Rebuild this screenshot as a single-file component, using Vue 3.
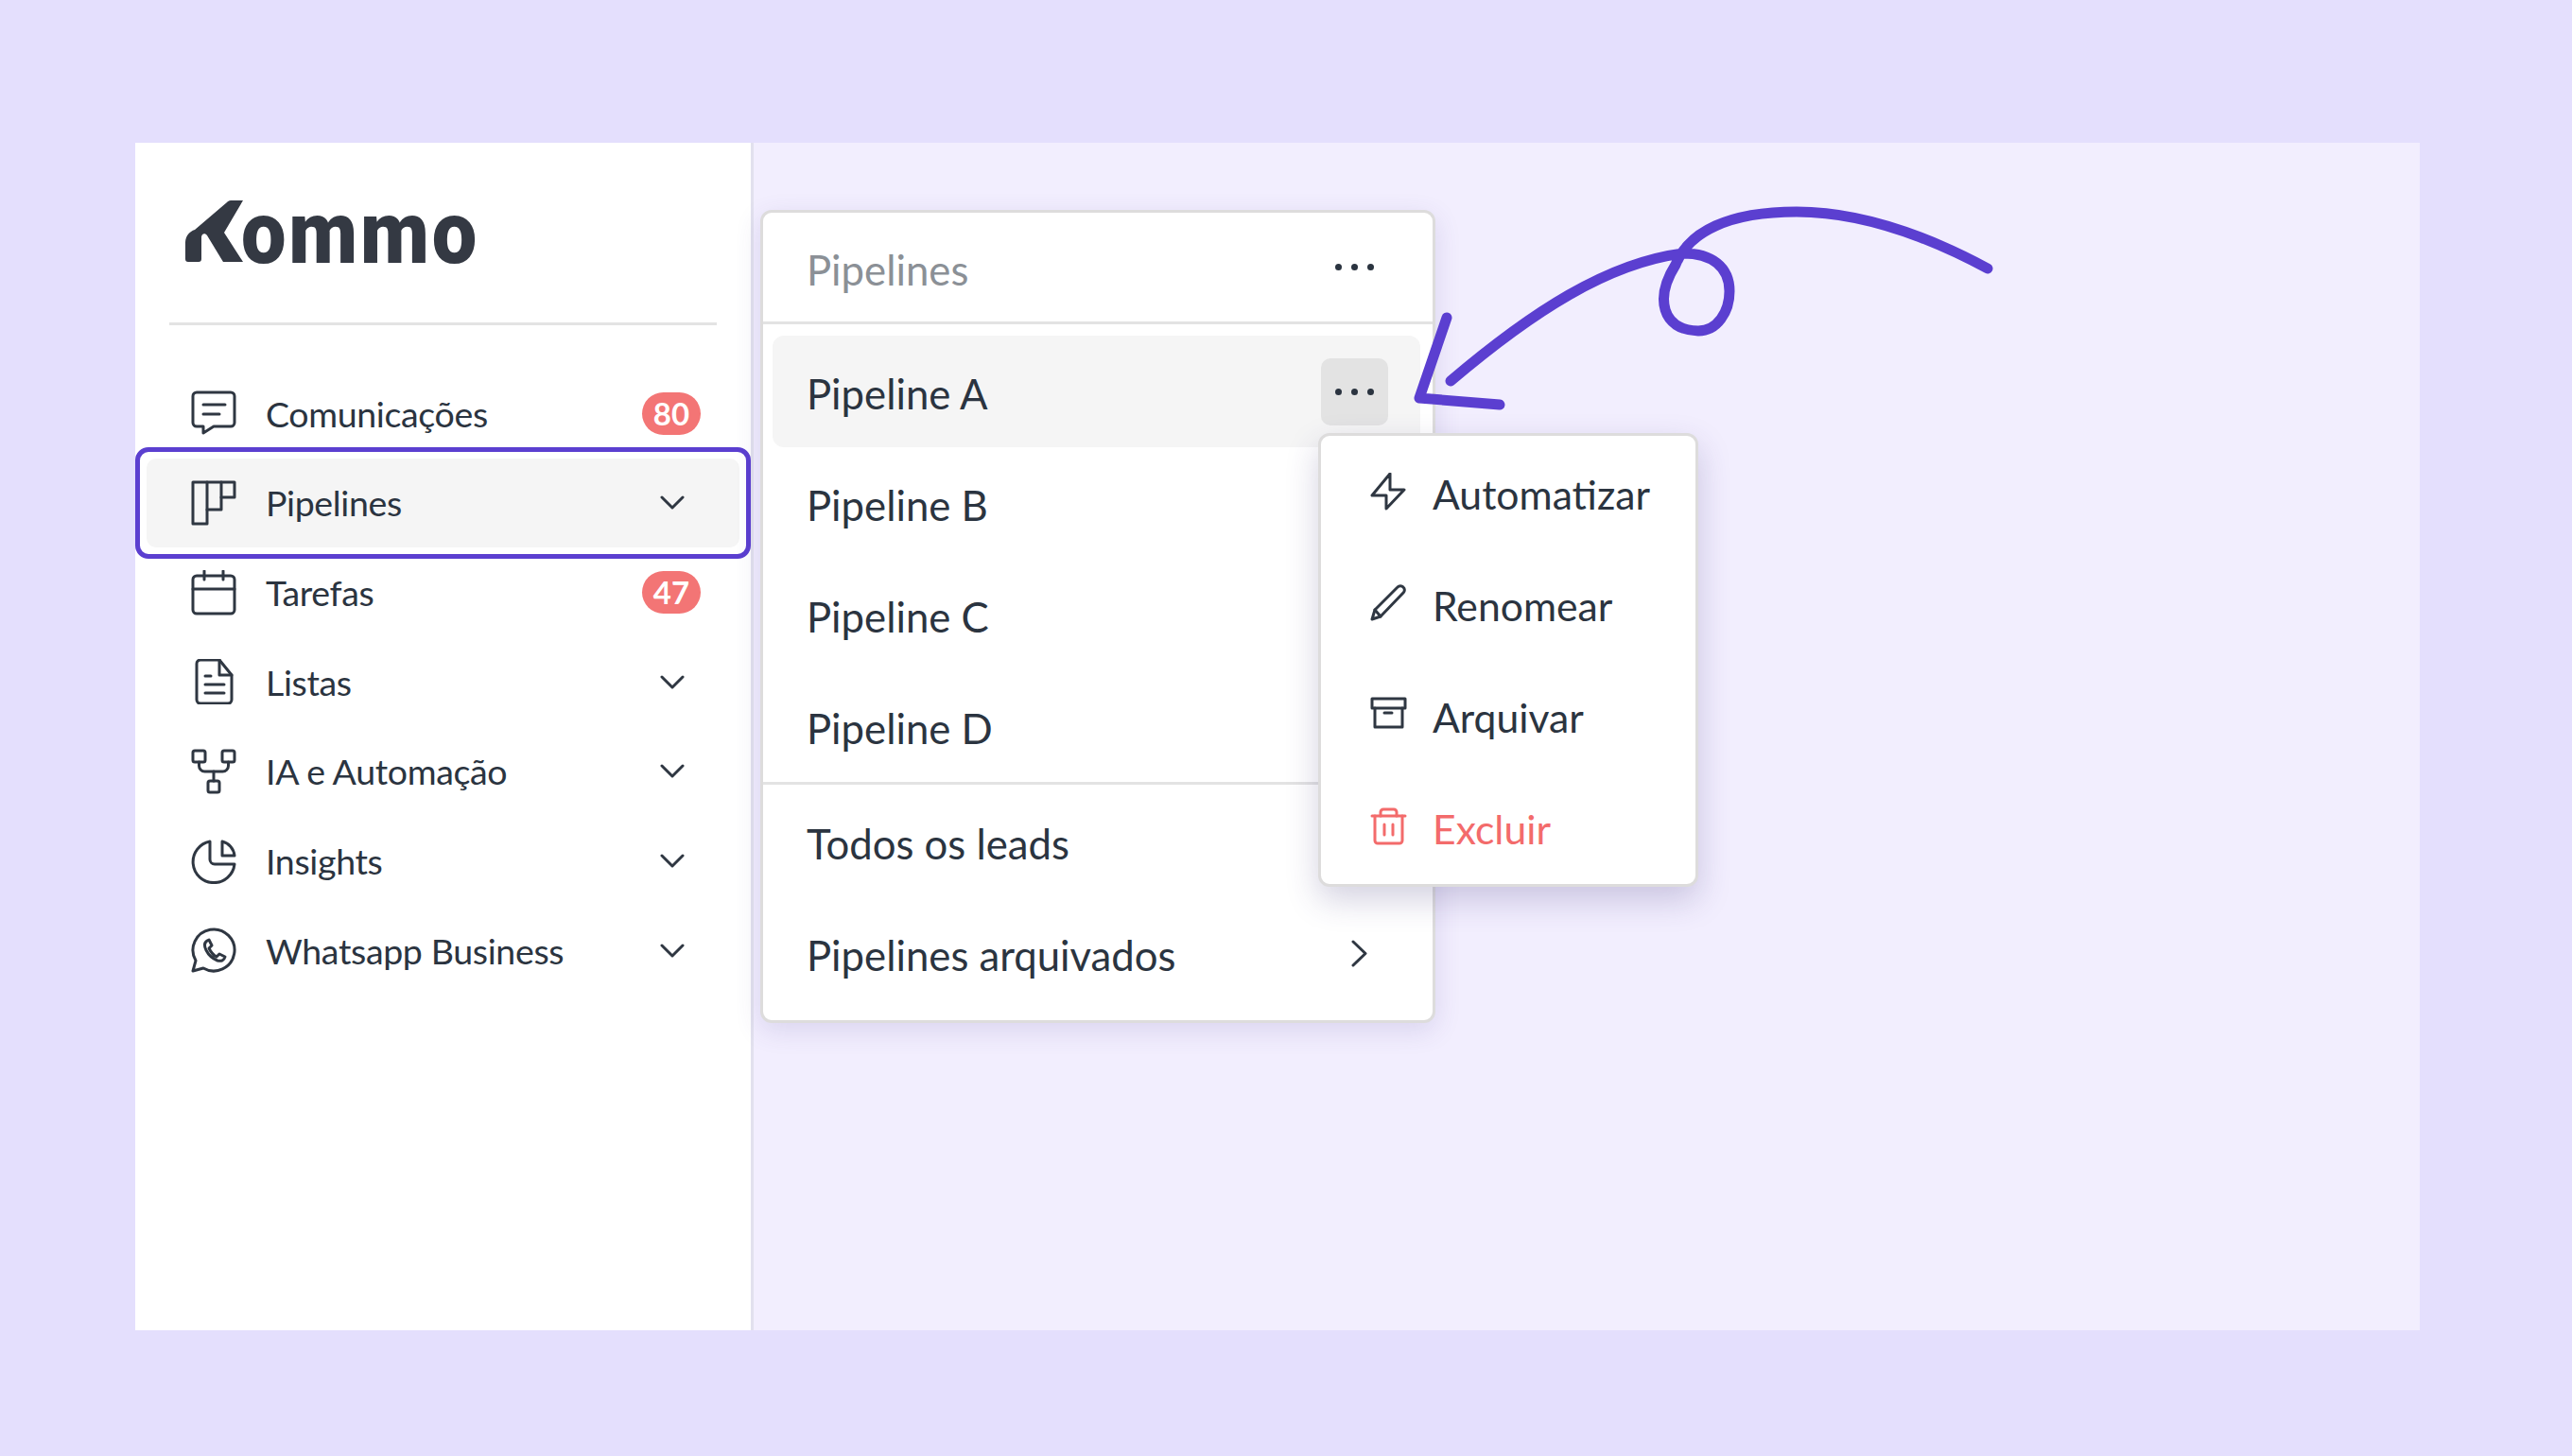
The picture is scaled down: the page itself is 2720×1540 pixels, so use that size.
<script setup>
const chevron = "M2 2 L13 13 L24 2";

const navItems = [
  {
    label: "Comunicações",
    badge: "80",
    paths: [
      "M6 2 H42 a4 4 0 0 1 4 4 V34 a4 4 0 0 1 -4 4 H24 L13 45 V38 H6 a4 4 0 0 1 -4 -4 V6 a4 4 0 0 1 4 -4 Z",
      "M13 15 H36",
      "M13 25 H30",
    ],
  },
  {
    label: "Pipelines",
    active: true,
    arrow: true,
    paths: ["M2 2 H46 V18 H32 V31 H17 V46 H2 Z", "M17 2 V31", "M32 2 V18"],
  },
  {
    label: "Tarefas",
    badge: "47",
    paths: [
      "M6 6 H42 a4 4 0 0 1 4 4 V42 a4 4 0 0 1 -4 4 H6 a4 4 0 0 1 -4 -4 V10 a4 4 0 0 1 4 -4 Z",
      "M2 20 H46",
      "M14 1 V10",
      "M34 1 V10",
    ],
  },
  {
    label: "Listas",
    arrow: true,
    paths: [
      "M10 1 H30 L43 17 V43 a4 4 0 0 1 -4 4 H10 a4 4 0 0 1 -4 -4 V5 a4 4 0 0 1 4 -4 Z",
      "M30 1 V17 H43",
      "M15 18 H21",
      "M15 27 H35",
      "M15 36 H35",
    ],
  },
  {
    label: "IA e Automação",
    arrow: true,
    paths: [
      "M4 2 H13 a2 2 0 0 1 2 2 V12 a2 2 0 0 1 -2 2 H4 a2 2 0 0 1 -2 -2 V4 a2 2 0 0 1 2 -2 Z",
      "M35 2 H44 a2 2 0 0 1 2 2 V12 a2 2 0 0 1 -2 2 H35 a2 2 0 0 1 -2 -2 V4 a2 2 0 0 1 2 -2 Z",
      "M20 34 H28 a2 2 0 0 1 2 2 V44 a2 2 0 0 1 -2 2 H20 a2 2 0 0 1 -2 -2 V36 a2 2 0 0 1 2 -2 Z",
      "M8.5 14 V18 a6 6 0 0 0 6 6 H33.5 a6 6 0 0 0 6 -6 V14",
      "M24 24 V34",
    ],
  },
  {
    label: "Insights",
    arrow: true,
    paths: [
      "M20 3 A22 22 0 1 0 46 27 H25 a5 5 0 0 1 -5 -5 Z",
      "M33 3 V18 H46 A17 17 0 0 0 33 3 Z",
    ],
  },
  {
    label: "Whatsapp Business",
    arrow: true,
    paths: [
      "M2 46 L5 35 A22 22 0 1 1 13 43 Z",
      "M17 14 c-3 2 -3 6 -1 10 c3 6 7 9 12 11 c4 1 7 0 8 -4 l-6 -3 l-3 3 c-4 -2 -6 -5 -8 -9 l3 -3 l-3 -6 Z",
    ],
  },
];

const pipelines = ["Pipeline A", "Pipeline B", "Pipeline C", "Pipeline D"];

const menuItems = [
  {
    label: "Automatizar",
    paths: ["M21 1 L2 24 H17 L17 38 L36 18 H21 Z"],
  },
  {
    label: "Renomear",
    paths: [
      "M2 37 L5 27 L29 3 a4 4 0 0 1 6 0 a4 4 0 0 1 0 6 L11 34 Z",
      "M5 27 L11 34",
    ],
  },
  {
    label: "Arquivar",
    paths: ["M2 3 H37 V13 H2 Z", "M5 13 V33 H34 V13", "M15 18 H23"],
  },
  {
    label: "Excluir",
    danger: true,
    paths: [
      "M2 9 H37",
      "M11 9 V5 a3 3 0 0 1 3 -3 H25 a3 3 0 0 1 3 3 V9",
      "M5 9 V35 a3 3 0 0 0 3 3 H31 a3 3 0 0 0 3 -3 V9",
      "M15 18 V29",
      "M24 18 V29",
    ],
  },
];
</script>

<template>
  <div class="page">
    <div class="frame">
      <aside class="sidebar">
        <div class="logo">
          <svg class="logo-mark" width="62" height="66" viewBox="0 0 62 66">
            <path d="M3 65 a3 3 0 0 1 -3 -3 V45 c0 -7 4 -12 10 -14 L44 2 c1 -1 2 -2 4 -2 H61 L41 34 L61 65 H40 L23 37 c-2 -3 -6 -2 -6 2 V62 a3 3 0 0 1 -3 3 Z" />
          </svg>
          <span class="logo-text">ommo</span>
        </div>
        <div class="sidebar-line"></div>
        <nav class="nav">
          <div
            v-for="item in navItems"
            :key="item.label"
            class="nav-row"
            :class="{ active: item.active }"
          >
            <svg class="nav-icon" width="48" height="48" viewBox="0 0 48 48">
              <path v-for="d in item.paths" :key="d" :d="d" />
            </svg>
            <span class="nav-label">{{ item.label }}</span>
            <span v-if="item.badge" class="badge">{{ item.badge }}</span>
            <svg v-if="item.arrow" class="chevron" width="26" height="15" viewBox="0 0 26 15">
              <path :d="chevron" />
            </svg>
          </div>
        </nav>
      </aside>

      <main class="main">
        <section class="panel">
          <header class="panel-head">
            <span class="txt">Pipelines</span>
            <span class="dots"><i></i><i></i><i></i></span>
          </header>
          <div class="panel-list">
            <div
              v-for="(name, index) in pipelines"
              :key="name"
              class="panel-row"
              :class="{ selected: index === 0 }"
            >
              <span class="txt">{{ name }}</span>
              <span v-if="index === 0" class="dots dots-btn"><i></i><i></i><i></i></span>
            </div>
          </div>
          <div class="panel-foot">
            <div class="panel-row"><span class="txt">Todos os leads</span></div>
            <div class="panel-row">
              <span class="txt">Pipelines arquivados</span>
              <svg class="chevron-right" width="17" height="29" viewBox="0 0 17 29">
                <path d="M2 2 L15 14.5 L2 27" />
              </svg>
            </div>
          </div>

          <div class="menu">
            <div
              v-for="item in menuItems"
              :key="item.label"
              class="menu-row"
              :class="{ danger: item.danger }"
            >
              <svg class="menu-icon" width="39" height="40" viewBox="0 0 39 40">
                <path v-for="d in item.paths" :key="d" :d="d" />
              </svg>
              <span class="txt">{{ item.label }}</span>
            </div>
          </div>
        </section>
      </main>
    </div>

    <svg class="scribble" width="2720" height="1540" viewBox="0 0 2720 1540">
      <path d="M2102 284 C2035 248 1968 224 1900 224 C1828 224 1786 245 1772 280 C1750 315 1757 349 1796 350 C1816 350 1829 330 1829 308 C1829 282 1810 268 1780 268 C1700 278 1620 330 1534 403" />
      <path d="M1530 336 L1501 421 L1586 428" />
    </svg>
  </div>
</template>

<style scoped>
.page {
  position: relative;
  width: 2720px;
  height: 1540px;
  box-sizing: border-box;
  padding: 151px 161px 133px 143px;
  background: #e4dffd;
  font-family: Lato, "Liberation Sans", sans-serif;
  color: #2b3440;
  overflow: hidden;
}
.frame {
  display: flex;
  height: 100%;
}
.sidebar {
  width: 651px;
  flex: none;
  background: #fff;
  border-right: 3px solid #e2e1ee;
  box-sizing: content-box;
}
.logo {
  display: flex;
  align-items: flex-end;
  height: 65px;
  margin: 62px 0 0 53px;
}
.logo-mark {
  display: block;
  fill: #343943;
  flex: none;
}
.logo-text {
  font-family: Roboto, sans-serif;
  font-weight: 900;
  font-size: 92px;
  line-height: 65px;
  letter-spacing: 3px;
  color: #343943;
  margin-left: -3px;
  height: 65px;
  position: relative;
  top: 1px;
  transform: scaleX(0.92);
  transform-origin: left center;
}
.sidebar-line {
  height: 3px;
  margin: 63px 36px 0;
  background: #e3e3e3;
}
.nav {
  display: flex;
  flex-direction: column;
  padding-top: 46px;
}
.nav-row {
  position: relative;
  display: flex;
  align-items: center;
  height: 94.67px;
  margin: 0 12px;
  padding: 0 41px 0 47px;
  font-size: 37.5px;
  letter-spacing: -0.35px;
}
.nav-row.active {
  background: #f5f5f5;
  border-radius: 10px;
}
.nav-row.active::after {
  content: "";
  position: absolute;
  inset: -12px;
  border: 5px solid #5b3fd0;
  border-radius: 14px;
}
.nav-icon {
  flex: none;
  fill: none;
  stroke: #2f3742;
  stroke-width: 3;
  stroke-linejoin: round;
  stroke-linecap: round;
}
.nav-label {
  margin-left: 31px;
  flex: 1;
}
.badge {
  width: 62px;
  height: 45px;
  border-radius: 23px;
  background: #f37575;
  color: #fff;
  font-weight: 700;
  font-size: 33px;
  line-height: 45px;
  letter-spacing: 0;
  text-align: center;
}
.chevron {
  margin-right: 17px;
  fill: none;
  stroke: #2f3742;
  stroke-width: 3;
  stroke-linecap: round;
  stroke-linejoin: round;
}
.main {
  flex: 1;
  background: #f2eefe;
}
.panel {
  position: relative;
  width: 714px;
  height: 860px;
  box-sizing: border-box;
  margin: 71px 0 0 7px;
  background: #fff;
  border: 3px solid #dddcdc;
  border-radius: 12px;
  box-shadow: 0 8px 28px rgba(70, 60, 140, 0.14);
  font-size: 43.7px;
}
.txt {
  padding-top: 4px;
}
.panel-head {
  display: flex;
  align-items: center;
  justify-content: space-between;
  height: 115px;
  padding: 0 47px 0 46px;
  border-bottom: 3px solid #e3e3e3;
  color: #8b9096;
}
.dots {
  display: flex;
  align-items: center;
  justify-content: center;
  gap: 10px;
  width: 71px;
  height: 71px;
}
.dots i {
  width: 7px;
  height: 7px;
  border-radius: 50%;
  background: #2b3440;
}
.dots-btn {
  background: #e3e3e3;
  border-radius: 10px;
}
.panel-list {
  padding: 12px 13px 0 10px;
  border-bottom: 3px solid #e3e3e3;
}
.panel-foot {
  padding: 1px 13px 0 10px;
}
.panel-row {
  display: flex;
  align-items: center;
  justify-content: space-between;
  height: 118px;
  padding: 0 34px 0 36px;
  border-radius: 12px;
}
.panel-row.selected {
  background: #f5f5f5;
}
.chevron-right {
  margin-right: 22px;
  fill: none;
  stroke: #2f3742;
  stroke-width: 3;
  stroke-linecap: round;
  stroke-linejoin: round;
}
.menu {
  position: absolute;
  left: 587px;
  top: 233px;
  width: 402px;
  box-sizing: border-box;
  padding-bottom: 2px;
  background: #fff;
  border: 3px solid #dddcdc;
  border-radius: 12px;
  box-shadow: 0 14px 34px rgba(60, 50, 120, 0.22);
  font-size: 42.7px;
}
.menu-row {
  display: flex;
  align-items: center;
  height: 118px;
  padding-left: 52px;
}
.menu-row .txt {
  margin-left: 27px;
}
.menu-icon {
  flex: none;
  fill: none;
  stroke: #2f3742;
  stroke-width: 3;
  stroke-linejoin: round;
  stroke-linecap: round;
}
.menu-row.danger {
  color: #f36b6b;
}
.menu-row.danger .menu-icon {
  stroke: #f36b6b;
}
.scribble {
  position: absolute;
  left: 0;
  top: 0;
  pointer-events: none;
  fill: none;
  stroke: #5b3fd0;
  stroke-width: 11;
  stroke-linecap: round;
  stroke-linejoin: round;
}
</style>
